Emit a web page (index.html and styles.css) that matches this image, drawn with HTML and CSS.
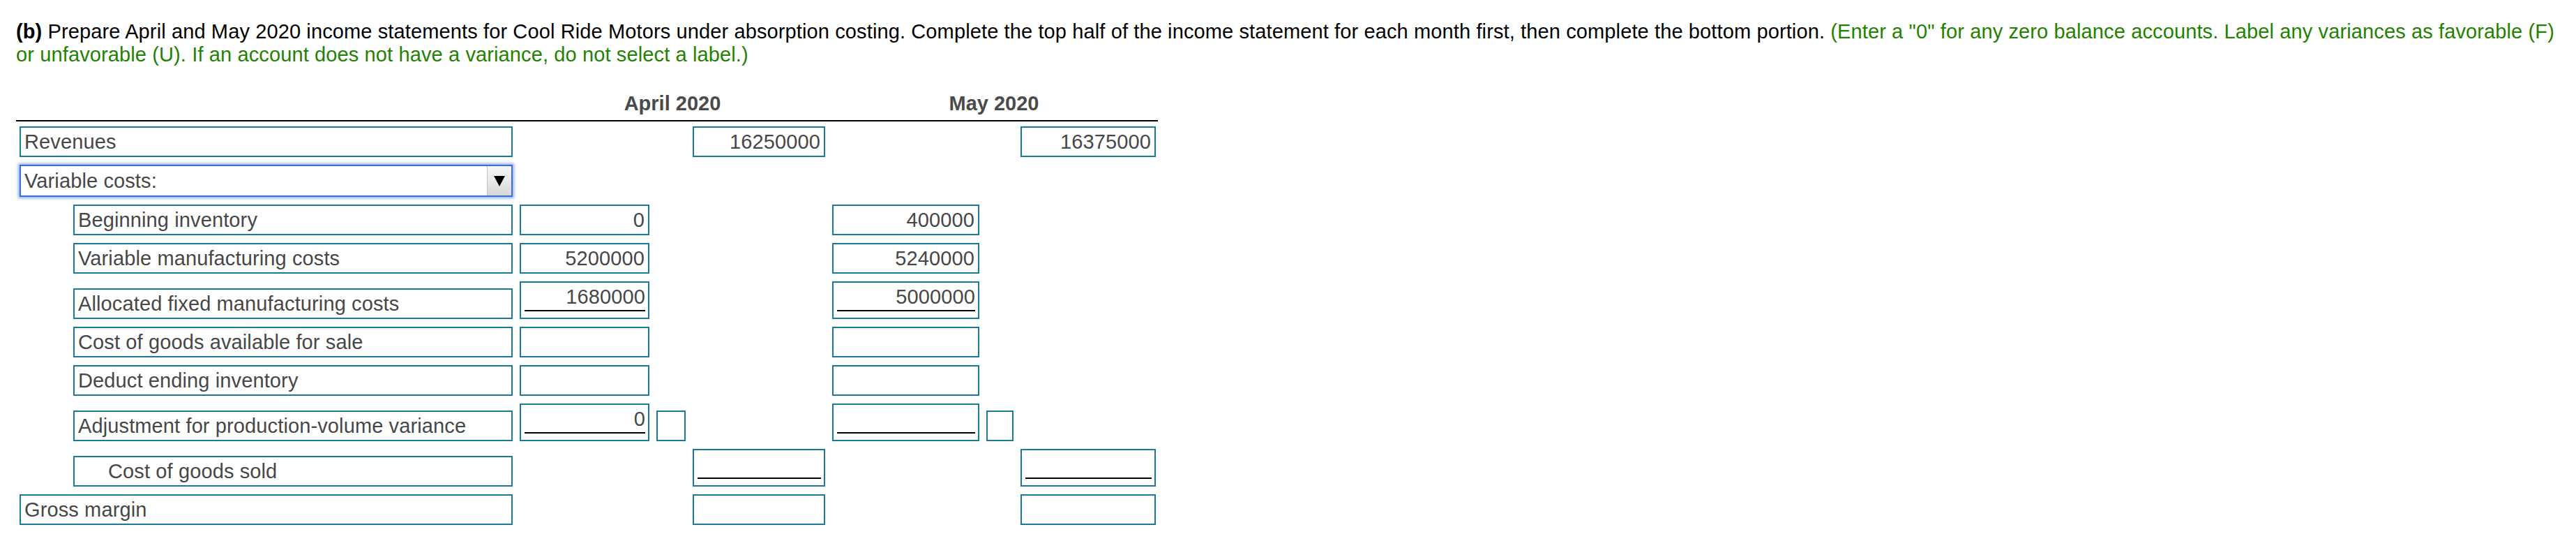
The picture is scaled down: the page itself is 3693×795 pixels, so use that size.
FILE: index.html
```html
<!DOCTYPE html>
<html lang="en">
<head>
<meta charset="utf-8">
<title>Income statements – absorption costing</title>
<link rel="stylesheet" href="styles.css">
</head>
<body>
<div class="page">
  <p class="prompt"><b>(b)</b> Prepare April and May 2020 income statements for Cool Ride Motors under absorption costing. Complete the top half of the income statement for each month first, then complete the bottom portion. <span class="hint">(Enter a "0" for any zero balance accounts. Label any variances as favorable (F) or unfavorable (U). If an account does not have a variance, do not select a label.)</span></p>

  <div class="sheet">
    <div class="head cols">
      <div class="month april">April 2020</div>
      <div class="month may">May 2020</div>
    </div>

    <div class="rows">
      <div class="row cols">
        <div class="box label c1">Revenues</div>
        <div class="box num c4">16250000</div>
        <div class="box num c7">16375000</div>
      </div>

      <div class="row cols">
        <div class="select c1">
          <span class="select-text">Variable costs:</span>
          <span class="select-btn"><span class="tri"></span></span>
        </div>
      </div>

      <div class="row cols">
        <div class="box label indent c1">Beginning inventory</div>
        <div class="box num c2">0</div>
        <div class="box num c5">400000</div>
      </div>

      <div class="row cols">
        <div class="box label indent c1">Variable manufacturing costs</div>
        <div class="box num c2">5200000</div>
        <div class="box num c5">5240000</div>
      </div>

      <div class="row cols">
        <div class="box label indent c1">Allocated fixed manufacturing costs</div>
        <div class="box tall c2"><div class="ul num">1680000</div></div>
        <div class="box tall c5"><div class="ul num">5000000</div></div>
      </div>

      <div class="row cols">
        <div class="box label indent c1">Cost of goods available for sale</div>
        <div class="box num c2"></div>
        <div class="box num c5"></div>
      </div>

      <div class="row cols">
        <div class="box label indent c1">Deduct ending inventory</div>
        <div class="box num c2"></div>
        <div class="box num c5"></div>
      </div>

      <div class="row cols">
        <div class="box label indent c1">Adjustment for production-volume variance</div>
        <div class="box tall c2"><div class="ul num">0</div></div>
        <div class="box c3"></div>
        <div class="box tall c5"><div class="ul num"></div></div>
        <div class="box c6"></div>
      </div>

      <div class="row cols">
        <div class="box label indent sub c1">Cost of goods sold</div>
        <div class="box tall c4"><div class="ul num"></div></div>
        <div class="box tall c7"><div class="ul num"></div></div>
      </div>

      <div class="row cols">
        <div class="box label c1">Gross margin</div>
        <div class="box num c4"></div>
        <div class="box num c7"></div>
      </div>
    </div>
  </div>
</div>
</body>
</html>
```

FILE: styles.css
```css
html, body {
  margin: 0;
  padding: 0;
  background: #ffffff;
}

.page {
  padding: 29px 13px 0 23px;
  font-family: "Liberation Sans", Arial, Helvetica, sans-serif;
  font-size: 29px;
  letter-spacing: 0.12px;
  line-height: 33px;
  color: #000000;
}

.prompt {
  margin: 0;
}

.prompt b {
  font-weight: bold;
}

.hint {
  color: #1f8200;
}

.sheet {
  width: 1637px;
  margin-top: 37px;
}

.cols {
  display: grid;
  grid-template-columns: 707px 186px 42px 190px 211px 39px 194px;
  column-gap: 10px;
  padding-left: 5px;
  align-items: end;
}

.head {
  border-bottom: 2px solid #000000;
  padding-bottom: 7px;
}

.month {
  font-weight: bold;
  color: #4a4a4a;
  text-align: center;
  letter-spacing: 0;
}

.april { grid-column: 2 / 5; }
.may { grid-column: 5 / 8; }

.rows {
  display: flex;
  flex-direction: column;
  row-gap: 11px;
  margin-top: 7px;
}

.c1 { grid-column: 1; }
.c2 { grid-column: 2; }
.c3 { grid-column: 3; }
.c4 { grid-column: 4; }
.c5 { grid-column: 5; }
.c6 { grid-column: 6; }
.c7 { grid-column: 7; }

.box {
  box-sizing: border-box;
  height: 44px;
  border: 2px solid #1b7a99;
  background: #ffffff;
  color: #474747;
  line-height: 40px;
  padding: 0 5px;
  white-space: nowrap;
  overflow: hidden;
}

.label {
  padding-left: 5px;
}

.indent {
  margin-left: 77px;
}

.sub {
  padding-left: 48px;
}

.num {
  text-align: right;
}

.tall {
  height: 54px;
  padding: 0 4px 0 5px;
}

.ul {
  height: 39px;
  line-height: 40px;
  border-bottom: 2px solid #000000;
}

.select {
  box-sizing: border-box;
  height: 46px;
  border: 2px solid #3d6fd8;
  box-shadow: 0 0 4px 2px rgba(70, 120, 225, 0.6);
  background: #ffffff;
  display: flex;
  align-items: stretch;
  color: #474747;
  line-height: 42px;
}

.select-text {
  flex: 1;
  padding-left: 5px;
  white-space: nowrap;
}

.select-btn {
  width: 34px;
  border-left: 1px solid #c4c4c4;
  background: linear-gradient(#f6f6f6, #e6e6e6 60%, #d6d6d6);
  display: flex;
  align-items: center;
  justify-content: center;
}

.tri {
  width: 0;
  height: 0;
  border-left: 8px solid transparent;
  border-right: 8px solid transparent;
  border-top: 15px solid #000000;
}
```
